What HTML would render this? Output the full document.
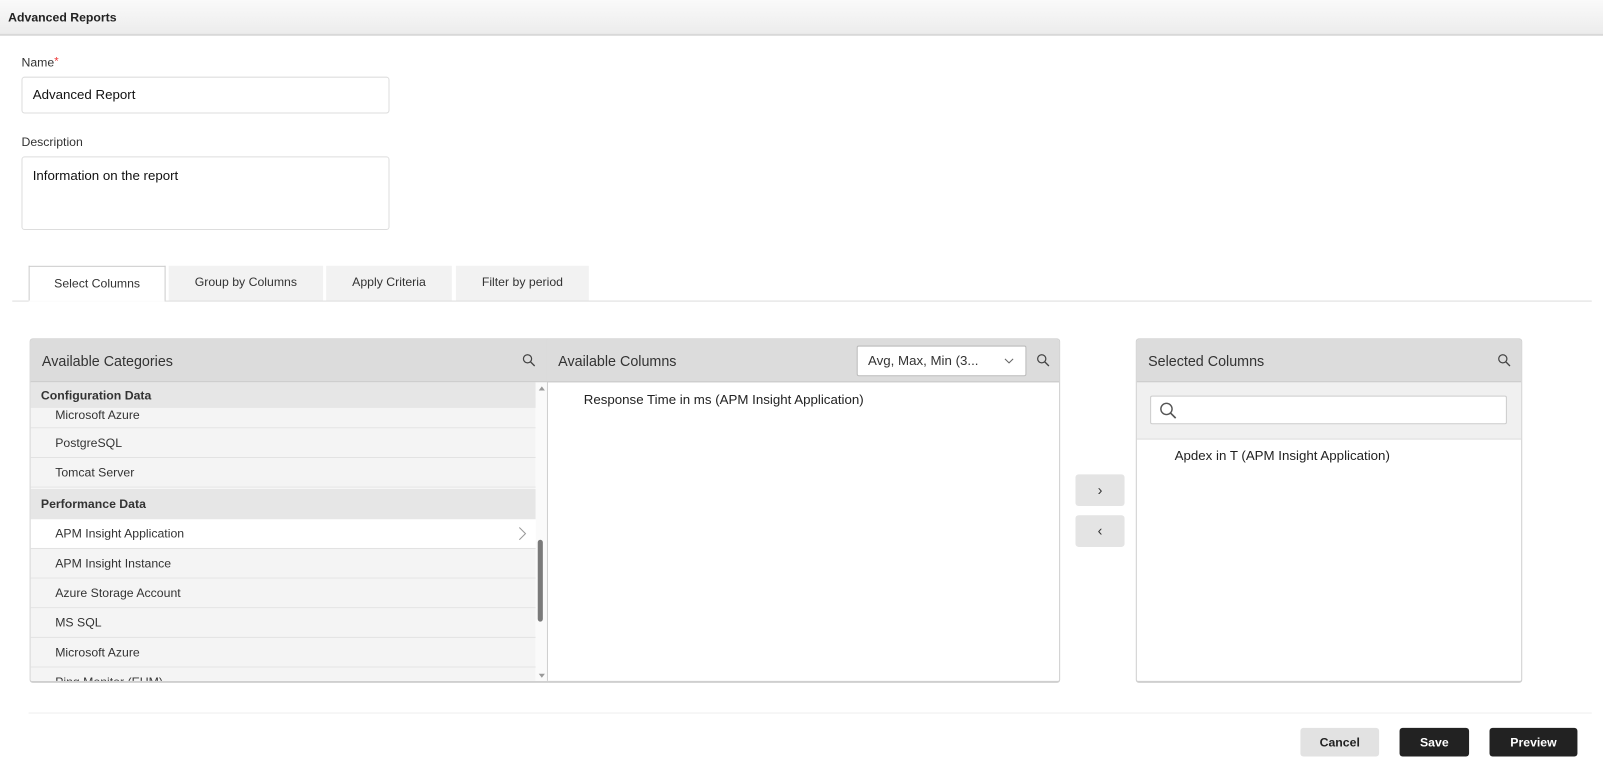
<!DOCTYPE html>
<html><head><style>
*{box-sizing:border-box;margin:0;padding:0}
html,body{width:1603px;height:767px;overflow:hidden;background:#fff}
#w{width:1568px;height:750px;transform:scale(1.02232);transform-origin:0 0;font-family:"Liberation Sans",sans-serif;color:#222;position:relative;font-size:13px}
.abs{position:absolute}
.hdr{left:0;top:0;width:1568px;height:35px;background:linear-gradient(#fafafa,#ececec);border-bottom:2px solid #d8d8d8}
.hdr span{position:absolute;left:8px;top:10px;font-size:12px;font-weight:bold;color:#222}
.lbl{font-size:12px;color:#333}
.inp{border:1px solid #ddd;border-radius:3px;background:#fff;padding-left:10px;font-size:13px;color:#111}
.tab{top:260px;height:34px;background:#f2f2f2;font-size:12px;color:#333;text-align:center;line-height:33px}
.panel{border:1px solid #cfcfcf;border-radius:3px;overflow:hidden;background:#fff}
.ph{height:42px;background:#dcdcdc;border-bottom:1px solid #c8c8c8;font-size:14px;color:#333;line-height:42px;padding-left:11px}
.row{position:absolute;left:0;width:494px;height:29px;background:#f4f4f4;border-bottom:1px solid #e2e2e2;font-size:12px;color:#333;padding-left:24px;line-height:28px}
.grp{position:absolute;left:0;width:494px;background:#e6e6e6;font-size:12px;font-weight:bold;color:#333;padding-left:10px}
.btn{top:712px;height:28px;border-radius:3px;font-size:12px;font-weight:bold;text-align:center;line-height:28px}
.mv{left:1052px;width:48px;height:31px;background:#e4e4e4;border-radius:3px;text-align:center;line-height:30px;font-size:14px;color:#333}
</style></head><body><div id="w">
<div class="abs hdr"><span>Advanced Reports</span></div>
<div class="abs lbl" style="left:21px;top:54px">Name<span style="color:#e33;vertical-align:top;font-size:11px">*</span></div>
<div class="abs inp" style="left:21px;top:75px;width:360px;height:36px;line-height:34px">Advanced Report</div>
<div class="abs lbl" style="left:21px;top:132px">Description</div>
<div class="abs inp" style="left:21px;top:153px;width:360px;height:72px;padding-top:10px">Information on the report</div>
<div class="abs tab" style="left:28px;width:134px;background:#fff;border:1px solid #ccc;border-bottom:none;height:35px">Select Columns</div>
<div class="abs tab" style="left:165px;width:151px">Group by Columns</div>
<div class="abs tab" style="left:319px;width:123px">Apply Criteria</div>
<div class="abs tab" style="left:446px;width:130px">Filter by period</div>
<div class="abs" style="left:12px;top:294px;width:1545px;height:1px;background:#ddd"></div>
<div class="abs" style="left:28px;top:294px;width:133px;height:1px;background:#fff"></div>

<div class="abs panel" style="left:29px;top:331px;width:1008px;height:337px;border-bottom-width:2px">
 <div class="ph" style="border-right:1px solid #c8c8c8;width:506px;position:absolute;left:0;top:0">Available Categories</div>
 <div class="ph" style="position:absolute;left:505px;top:0;width:502px">Available Columns</div>
 <svg class="abs" style="left:481px;top:14px" width="13" height="13" viewBox="0 0 13 13"><circle cx="5" cy="5" r="4" fill="none" stroke="#444" stroke-width="1.2"/><path d="M8 8l4 4" stroke="#444" stroke-width="1.3"/></svg>
 <div class="abs" style="left:808px;top:6px;width:166px;height:30px;background:#fff;border:1px solid #bbb;border-radius:2px;font-size:13px;line-height:28px;padding-left:10px;color:#333">Avg, Max, Min (3...<svg class="abs" style="left:143px;top:11px" width="10" height="6"><path d="M1 1l4 4 4-4" fill="none" stroke="#666"/></svg></div>
 <svg class="abs" style="left:984px;top:14px" width="13" height="13" viewBox="0 0 13 13"><circle cx="5" cy="5" r="4" fill="none" stroke="#444" stroke-width="1.2"/><path d="M8 8l4 4" stroke="#444" stroke-width="1.3"/></svg>
 <div class="abs" style="left:0;top:42px;width:505px;height:294px;overflow:hidden;background:#fff">
  <div class="row" style="top:15px;height:30px;line-height:34px">Microsoft Azure</div>
  <div class="grp" style="top:0;height:25px;line-height:26px">Configuration Data</div>
  <div class="row" style="top:45px">PostgreSQL</div>
  <div class="row" style="top:74px">Tomcat Server</div>
  <div class="grp" style="top:104px;height:30px;line-height:30px">Performance Data</div>
  <div class="row" style="top:134px;background:#fff">APM Insight Application<svg class="abs" style="left:477px;top:7px" width="8" height="14"><path d="M1 1l6 6-6 6" fill="none" stroke="#999"/></svg></div>
  <div class="row" style="top:163px">APM Insight Instance</div>
  <div class="row" style="top:192px">Azure Storage Account</div>
  <div class="row" style="top:221px">MS SQL</div>
  <div class="row" style="top:250px">Microsoft Azure</div>
  <div class="row" style="top:279px">Ping Monitor (EUM)</div>
  <div class="abs" style="left:494px;top:0;width:11px;height:294px;background:#fafafa"></div>
  <div class="abs" style="left:497px;top:4px;width:0;height:0;border:3px solid transparent;border-bottom:4px solid #999;border-top:none"></div>
  <div class="abs" style="left:497px;top:285px;width:0;height:0;border:3px solid transparent;border-top:4px solid #999;border-bottom:none"></div>
  <div class="abs" style="left:496px;top:154px;width:5px;height:80px;background:#7a7a7a;border-radius:3px"></div>
 </div>
 <div class="abs" style="left:505px;top:42px;width:1px;height:295px;background:#cfcfcf"></div>
 <div class="abs" style="left:541px;top:51px;font-size:13px;color:#222">Response Time in ms (APM Insight Application)</div>
</div>

<div class="abs mv" style="top:464px">&#8250;</div>
<div class="abs mv" style="top:504px">&#8249;</div>

<div class="abs panel" style="left:1111px;top:331px;width:378px;height:337px;border-bottom-width:2px">
 <div class="ph">Selected Columns</div>
 <svg class="abs" style="left:353px;top:14px" width="13" height="13" viewBox="0 0 13 13"><circle cx="5" cy="5" r="4" fill="none" stroke="#444" stroke-width="1.2"/><path d="M8 8l4 4" stroke="#444" stroke-width="1.3"/></svg>
 <div class="abs" style="left:0;top:42px;width:376px;height:56px;background:#f0f0f0;border-bottom:1px solid #ddd"></div>
 <div class="abs" style="left:13px;top:55px;width:349px;height:28px;background:#fff;border:1px solid #ccc;border-radius:2px"><svg class="abs" style="left:8px;top:5px" width="18" height="18" viewBox="0 0 18 18"><circle cx="7" cy="7" r="5.5" fill="none" stroke="#555" stroke-width="1.4"/><path d="M11 11l5 5" stroke="#555" stroke-width="1.6"/></svg></div>
 <div class="abs" style="left:37px;top:106px;font-size:13px;color:#222">Apdex in T (APM Insight Application)</div>
</div>

<div class="abs" style="left:28px;top:697px;width:1529px;height:1px;background:#eee"></div>
<div class="abs btn" style="left:1272px;width:77px;background:#e2e2e2;color:#222">Cancel</div>
<div class="abs btn" style="left:1369px;width:68px;background:#222;color:#fff">Save</div>
<div class="abs btn" style="left:1457px;width:86px;background:#222;color:#fff">Preview</div>
</div></body></html>
